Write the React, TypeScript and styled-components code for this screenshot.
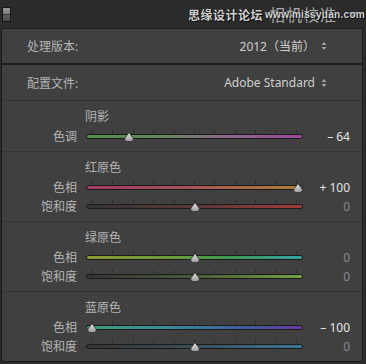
import React from 'react';
import styled, { createGlobalStyle } from 'styled-components';

const GlobalStyle = createGlobalStyle`
  html, body {
    margin: 0;
    padding: 0;
    background: #2b2b2b;
  }
  body {
    width: 366px;
    height: 364px;
    overflow: hidden;
    font-family: 'Noto Sans', 'Noto Sans CJK SC', sans-serif;
  }
`;

type SliderData = {
  label: string;
  value: number;
  gradient: string;
};

type Group = {
  title: string;
  sliders: SliderData[];
};

const groups: Group[] = [
  {
    title: '阴影',
    sliders: [
      {
        label: '色调',
        value: -64,
        gradient: 'linear-gradient(to right, #4f8f47, #6c8266 40%, #866b84 62%, #9d4a9b)',
      },
    ],
  },
  {
    title: '红原色',
    sliders: [
      {
        label: '色相',
        value: 100,
        gradient: 'linear-gradient(to right, #a23a66, #a5525a 45%, #ad7440 85%, #b07c3a)',
      },
      {
        label: '饱和度',
        value: 0,
        gradient: 'linear-gradient(to right, #333333, #5a3838 50%, #a23c3c)',
      },
    ],
  },
  {
    title: '绿原色',
    sliders: [
      {
        label: '色相',
        value: 0,
        gradient: 'linear-gradient(to right, #8c9a32, #6a9a3a 40%, #3f9a52 65%, #37a0a2)',
      },
      {
        label: '饱和度',
        value: 0,
        gradient: 'linear-gradient(to right, #343434, #4a5a3a 50%, #71a242)',
      },
    ],
  },
  {
    title: '蓝原色',
    sliders: [
      {
        label: '色相',
        value: -100,
        gradient: 'linear-gradient(to right, #3aa07a, #3a889a 40%, #3f5a9c 75%, #6a3aa2)',
      },
      {
        label: '饱和度',
        value: 0,
        gradient: 'linear-gradient(to right, #343434, #3a4e5a 50%, #3d7896)',
      },
    ],
  },
];

const formatValue = (v: number) => {
  if (v > 0) return `+ ${v}`;
  if (v < 0) return `– ${Math.abs(v)}`;
  return '0';
};

const UpDown: React.FC = () => (
  <svg width='6' height='10' viewBox='0 0 6 10'>
    <path d='M0.5 4 L3 1 L5.5 4 Z' fill='#a4a4a4' />
    <path d='M0.5 6 L3 9 L5.5 6 Z' fill='#a4a4a4' />
  </svg>
);

const Thumb: React.FC<{ left: number }> = ({ left }) => (
  <ThumbWrap style={{ left }}>
    <svg width='10' height='10' viewBox='0 0 10 10'>
      <defs>
        <linearGradient id='thumbFill' x1='0' y1='0' x2='0' y2='1'>
          <stop offset='0' stopColor='#e2e2e2' />
          <stop offset='1' stopColor='#9c9c9c' />
        </linearGradient>
      </defs>
      <path
        d='M5 0.5 L9.2 6.2 Q9.8 9.5 6.8 9.5 L3.2 9.5 Q0.2 9.5 0.8 6.2 Z'
        fill='url(#thumbFill)'
        stroke='#2a2a2a'
        strokeWidth='0.8'
      />
    </svg>
  </ThumbWrap>
);

const Slider: React.FC<{ data: SliderData }> = ({ data }) => {
  // tick range runs 6px..212px inside a 217px track
  const center = 109 + data.value * 1.03;
  return (
    <SliderRow>
      <SliderLabel>{data.label}</SliderLabel>
      <TrackArea>
        <Ticks>
          {Array.from({ length: 11 }).map((_, i) => (
            <Tick key={i} />
          ))}
        </Ticks>
        <Bar style={{ background: data.gradient }} />
        <Thumb left={center - 5} />
      </TrackArea>
      <Value $active={data.value !== 0}>{formatValue(data.value)}</Value>
    </SliderRow>
  );
};

export default function App() {
  return (
    <>
      <GlobalStyle />
      <Header>
        <Toggle />
        <Spacer />
        <Watermark>思缘设计论坛</Watermark>
        <TitleWrap>
          <Title>相机校准</Title>
          <Site>www.missyuan.com</Site>
        </TitleWrap>
        <Caret>▼</Caret>
      </Header>
      <Panel>
        <InfoRow $divider='thick'>
          <InfoLabel>处理版本:</InfoLabel>
          <InfoValue>
            2012（当前）
            <UpDown />
          </InfoValue>
        </InfoRow>
        <InfoRow $divider='thin'>
          <InfoLabel>配置文件:</InfoLabel>
          <InfoValue>
            Adobe Standard
            <UpDown />
          </InfoValue>
        </InfoRow>
        {groups.map((g, i) => (
          <Section key={g.title} $last={i === groups.length - 1}>
            <SectionTitle>{g.title}</SectionTitle>
            <Sliders>
              {g.sliders.map((s) => (
                <Slider key={s.label} data={s} />
              ))}
            </Sliders>
          </Section>
        ))}
      </Panel>
    </>
  );
}

const Header = styled.div`
  height: 28px;
  display: flex;
  align-items: center;
  padding: 0 9px 0 2px;
  box-sizing: border-box;
  background: #2b2b2b;
`;

const Toggle = styled.div`
  width: 7px;
  height: 13px;
  border: 1px solid #161616;
  background: linear-gradient(to bottom, #9a9a9a 0%, #7c7c7c 45%, #3a3a3a 50%, #5e5e5e 55%, #4a4a4a 100%);
`;

const Spacer = styled.div`
  flex: 1;
`;

const Watermark = styled.span`
  font-family: 'Noto Sans CJK SC', sans-serif;
  font-size: 12px;
  font-weight: 700;
  color: #cfcfcf;
  letter-spacing: 0.5px;
  text-shadow: 0 0 1px #000, 1px 1px 0 #111;
  margin-right: 6px;
`;

const TitleWrap = styled.div`
  position: relative;
  display: flex;
  align-items: center;
`;

const Title = styled.span`
  font-family: 'Noto Sans CJK SC', sans-serif;
  font-size: 16px;
  color: #a9a9a9;
  letter-spacing: 1px;
`;

const Site = styled.span`
  position: absolute;
  left: -4px;
  top: 7px;
  font-family: 'Liberation Sans', sans-serif;
  font-size: 10px;
  font-weight: 700;
  color: #d6d6d6;
  letter-spacing: 0.3px;
  text-shadow: 0 0 1px #000, 1px 1px 0 #111;
  white-space: nowrap;
`;

const Caret = styled.span`
  font-size: 8px;
  color: #a4a4a4;
  margin-left: 12px;
`;

const Panel = styled.div`
  width: 362px;
  margin-left: 1px;
  box-sizing: border-box;
  border: 1px solid #1b1b1b;
  background: #404040;
`;

const InfoRow = styled.div<{ $divider: 'thick' | 'thin' }>`
  height: ${(p) => (p.$divider === 'thick' ? 34 : 35)}px;
  display: flex;
  align-items: center;
  justify-content: space-between;
  padding: 0 35px 0 25px;
  border-bottom: ${(p) => (p.$divider === 'thick' ? '2px solid #1d1d1d' : '1px solid #343434')};
`;

const InfoLabel = styled.span`
  font-size: 12px;
  color: #b4b4b4;
`;

const InfoValue = styled.span`
  display: flex;
  align-items: center;
  gap: 6px;
  font-size: 12px;
  color: #cfcfcf;
`;

const Section = styled.div<{ $last: boolean }>`
  padding: 8px 0 5px;
  border-bottom: ${(p) => (p.$last ? 'none' : '1px solid #343434')};
`;

const SectionTitle = styled.div`
  height: 16px;
  line-height: 16px;
  padding-left: 83px;
  font-size: 12px;
  color: #b4b4b4;
`;

const Sliders = styled.div`
  margin-top: 2px;
  display: flex;
  flex-direction: column;
`;

const SliderRow = styled.div`
  height: 19px;
  display: grid;
  grid-template-columns: 75px 217px 1fr;
  column-gap: 9px;
  padding-right: 12px;
  align-items: center;
`;

const SliderLabel = styled.span`
  text-align: right;
  font-size: 12px;
  color: #b4b4b4;
  line-height: 19px;
`;

const TrackArea = styled.div`
  position: relative;
  height: 19px;
  box-sizing: border-box;
  padding-top: 3px;
  display: flex;
  flex-direction: column;
`;

const Ticks = styled.div`
  height: 3px;
  margin-bottom: 1px;
  padding: 0 6px;
  display: flex;
  justify-content: space-between;
`;

const Tick = styled.span`
  width: 1px;
  height: 3px;
  background: #2c2c2c;
`;

const Bar = styled.div`
  height: 3px;
  border: 1px solid #1a1a1a;
  border-radius: 3px;
`;

const ThumbWrap = styled.div`
  position: absolute;
  top: 5px;
  width: 10px;
  height: 10px;
  line-height: 0;
`;

const Value = styled.span<{ $active: boolean }>`
  text-align: right;
  font-size: 12px;
  line-height: 19px;
  color: ${(p) => (p.$active ? '#e4e4e4' : '#8a8a8a')};
`;
